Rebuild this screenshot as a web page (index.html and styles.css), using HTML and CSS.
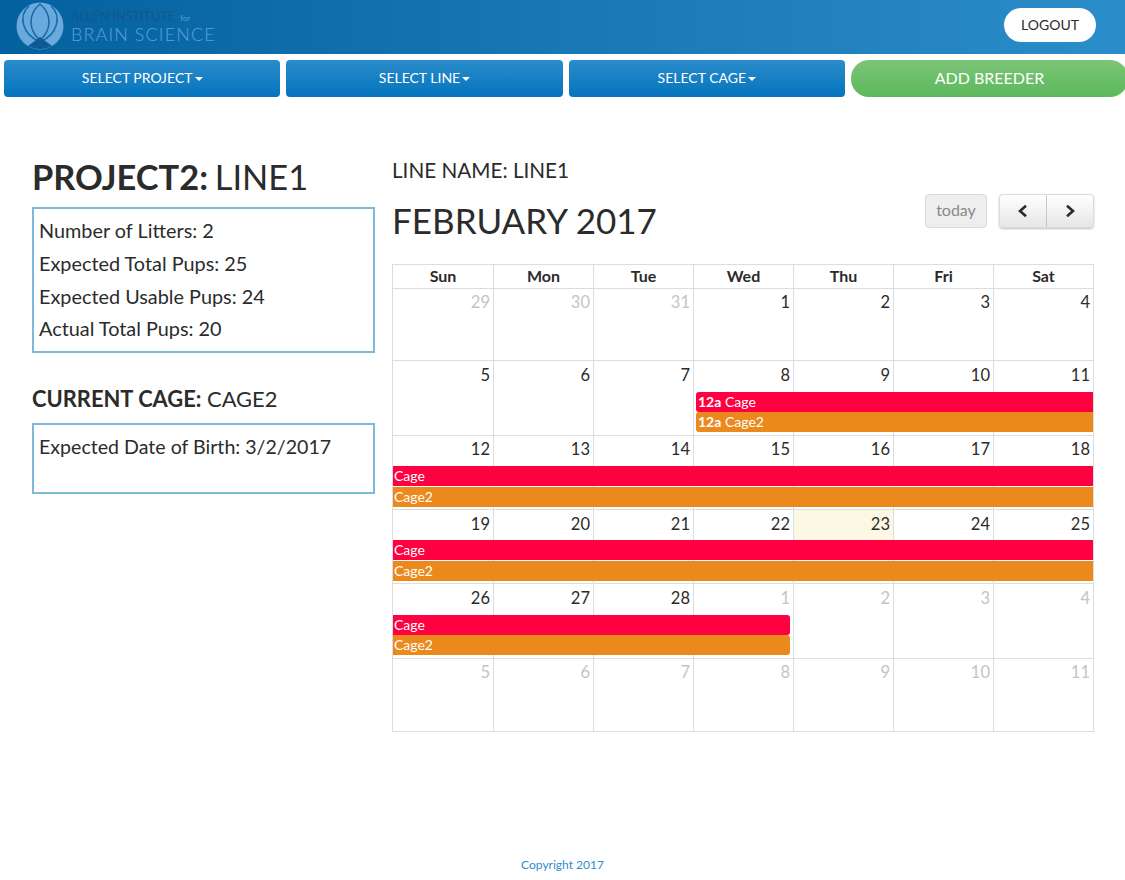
FILE: index.html
```html
<!DOCTYPE html>
<html>

<head>
    <title>Breeding Calendar</title>
    <link rel="stylesheet" href="styles.css">
</head>

<body>
    <header class="topbar">
        <div class="brand">
            <svg class="brand-logo" width="48" height="50" viewBox="0 0 48 50">
                <circle cx="24" cy="24" r="23.5" fill="#6aa9dc"/>
                <path d="M24 2C12 12 12 28 24 38C36 28 36 12 24 2Z" fill="none" stroke="#1a6ca8" stroke-width="1.6"/>
                <path d="M13 4C2 14 6 32 24 40C42 32 46 14 35 4" fill="none" stroke="#1a6ca8" stroke-width="1.6"/>
                <path d="M24 35L36 44C30 48 18 48 12 44Z" fill="#0f5a94"/>
            </svg>
            <div class="brand-text">
                <div class="brand-top">ALLEN INSTITUTE <small>for</small></div>
                <div class="brand-bottom">BRAIN SCIENCE</div>
            </div>
        </div>
        <button class="logout" type="button">LOGOUT</button>
    </header>

    <nav class="actions">
        <button class="select-btn" type="button">SELECT PROJECT<span class="caret"></span></button>
        <button class="select-btn" type="button">SELECT LINE<span class="caret"></span></button>
        <button class="select-btn" type="button">SELECT CAGE<span class="caret"></span></button>
        <button class="add-btn" type="button">ADD BREEDER</button>
    </nav>

    <main class="content">
        <section class="sidebar">
            <h1 class="project-title"><b>PROJECT2:</b> LINE1</h1>
            <div class="info-box stats">
                <p>Number of Litters: 2</p>
                <p>Expected Total Pups: 25</p>
                <p>Expected Usable Pups: 24</p>
                <p>Actual Total Pups: 20</p>
            </div>
            <h2 class="cage-title"><b>CURRENT CAGE:</b> CAGE2</h2>
            <div class="info-box birth">
                <p>Expected Date of Birth: 3/2/2017</p>
            </div>
        </section>

        <section class="calendar-wrap">
            <div class="line-name">LINE NAME: LINE1</div>
            <div class="cal-toolbar">
                <h2 class="month">FEBRUARY 2017</h2>
                <div class="cal-buttons">
                    <button class="today-btn" type="button">today</button>
                    <div class="nav-group">
                        <button type="button">
                            <svg width="14" height="14" viewBox="0 0 14 14"><path d="M10 1.7L4 7L10 12.3" fill="none" stroke="#2b2b2b" stroke-width="2.6"/></svg>
                        </button>
                        <button type="button">
                            <svg width="14" height="14" viewBox="0 0 14 14"><path d="M4 1.7L10 7L4 12.3" fill="none" stroke="#2b2b2b" stroke-width="2.6"/></svg>
                        </button>
                    </div>
                </div>
            </div>

            <div class="calendar">
                <div class="cal-head">
                    <div>Sun</div><div>Mon</div><div>Tue</div><div>Wed</div><div>Thu</div><div>Fri</div><div>Sat</div>
                </div>

                <div class="week h72 raised">
                    <div class="day other c1">29</div><div class="day other c2">30</div><div class="day other c3">31</div>
                    <div class="day c4">1</div><div class="day c5">2</div><div class="day c6">3</div><div class="day c7">4</div>
                </div>

                <div class="week h75">
                    <div class="day c1">5</div><div class="day c2">6</div><div class="day c3">7</div><div class="day c4">8</div>
                    <div class="day c5">9</div><div class="day c6">10</div><div class="day c7">11</div>
                    <div class="event red row2 from-wed start"><b>12a</b> Cage</div>
                    <div class="event orange row3 from-wed start"><b>12a</b> Cage2</div>
                </div>

                <div class="week h74 raised">
                    <div class="day c1">12</div><div class="day c2">13</div><div class="day c3">14</div><div class="day c4">15</div>
                    <div class="day c5">16</div><div class="day c6">17</div><div class="day c7">18</div>
                    <div class="event red row2 full">Cage</div>
                    <div class="event orange row3 full">Cage2</div>
                </div>

                <div class="week h74">
                    <div class="day c1">19</div><div class="day c2">20</div><div class="day c3">21</div><div class="day c4">22</div>
                    <div class="day today c5">23</div><div class="day c6">24</div><div class="day c7">25</div>
                    <div class="event red row2 full">Cage</div>
                    <div class="event orange row3 full">Cage2</div>
                </div>

                <div class="week h75">
                    <div class="day c1">26</div><div class="day c2">27</div><div class="day c3">28</div><div class="day other c4">1</div>
                    <div class="day other c5">2</div><div class="day other c6">3</div><div class="day other c7">4</div>
                    <div class="event red row2 to-wed end">Cage</div>
                    <div class="event orange row3 to-wed end">Cage2</div>
                </div>

                <div class="week h73 raised">
                    <div class="day other c1">5</div><div class="day other c2">6</div><div class="day other c3">7</div><div class="day other c4">8</div>
                    <div class="day other c5">9</div><div class="day other c6">10</div><div class="day other c7">11</div>
                </div>
            </div>
        </section>
    </main>

    <footer class="footer">Copyright 2017</footer>
</body>

</html>
```

FILE: styles.css
```css
* {
    box-sizing: border-box;
}

body {
    margin: 0;
    font-family: Lato, "Open Sans", sans-serif;
    color: #2b2b2b;
    background-color: #ffffff;
    overflow-x: hidden;
}

button {
    font-family: inherit;
    cursor: pointer;
}

/* top bar */
.topbar {
    display: flex;
    justify-content: space-between;
    align-items: center;
    height: 54px;
    padding: 0 29px 4px 16px;
    background: linear-gradient(to right, #04619f, #2c8dcb);
}

.brand {
    display: flex;
    align-items: flex-start;
    gap: 7px;
    height: 50px;
}

.brand-logo {
    display: block;
    margin-top: 2px;
}

.brand-text {
    padding-top: 10px;
}

.brand-top {
    font-size: 12.6px;
    line-height: 13px;
    color: #14578d;
}

.brand-top small {
    font-size: 8px;
    color: #5a9fd6;
    margin-left: 2px;
}

.brand-bottom {
    font-size: 18px;
    font-weight: 300;
    line-height: 18px;
    letter-spacing: 1.1px;
    color: #5aa3dc;
}

.logout {
    width: 92px;
    height: 34px;
    padding: 0 0 2px;
    border: none;
    border-radius: 17px;
    background-color: #ffffff;
    color: #2b2b2b;
    font-size: 14px;
}

/* action buttons */
.actions {
    display: flex;
    gap: 6px;
    padding: 6px 0 0 4px;
}

.select-btn {
    width: 276.33px;
    height: 37px;
    padding: 0 0 2px;
    border: none;
    border-radius: 4px;
    background: linear-gradient(to bottom, #2a8ccb, #0474bd);
    color: #ffffff;
    font-size: 14px;
}

.caret {
    display: inline-block;
    margin-left: 2px;
    vertical-align: middle;
    border-top: 4px solid #ffffff;
    border-left: 4px solid transparent;
    border-right: 4px solid transparent;
}

.add-btn {
    flex: 1;
    height: 37px;
    padding: 0 0 2px;
    margin-right: -3px;
    border: none;
    border-radius: 18px;
    background: linear-gradient(to bottom, #7cc576, #5cb85c);
    color: #ffffff;
    font-size: 16px;
}

/* main layout */
.content {
    display: flex;
    padding: 56px 31px 0 32px;
}

.sidebar {
    width: 343px;
    margin-right: 17px;
}

.project-title {
    margin: 3px 0 9px;
    font-size: 34.4px;
    line-height: 42px;
    font-weight: 400;
}

.project-title b {
    margin-right: -2px;
}

.info-box {
    border: 2px solid #7fb9d9;
    padding: 6px 5px;
}

.info-box p {
    margin: 0;
    font-size: 19.85px;
    line-height: 32.8px;
}

.stats {
    height: 146px;
    padding-top: 5px;
}

.birth {
    height: 71px;
}

.info-box.birth p {
    font-size: 19.6px;
}

.cage-title {
    margin: 32px 0 10px;
    font-size: 21.9px;
    line-height: 28px;
    font-weight: 400;
}

/* calendar */
.calendar-wrap {
    width: 702px;
}

.line-name {
    font-size: 20.7px;
    line-height: 28px;
    margin: 3px 0 10px;
}

.cal-toolbar {
    display: flex;
    justify-content: space-between;
    align-items: flex-start;
    height: 70px;
}

.month {
    margin: 3px 0 0;
    font-size: 35px;
    line-height: 46px;
    font-weight: 400;
}

.cal-buttons {
    display: flex;
    gap: 12px;
}

.today-btn {
    width: 62px;
    height: 34px;
    padding: 0 0 3px;
    border: 1px solid #d9d9d9;
    border-radius: 4px;
    background-color: #eeeeee;
    color: #8a8a8a;
    font-size: 16px;
}

.nav-group {
    display: flex;
    height: 34px;
    border-radius: 4px;
    box-shadow: 0 1px 2px rgba(0, 0, 0, 0.25);
}

.nav-group button {
    display: flex;
    align-items: center;
    justify-content: center;
    width: 47.5px;
    padding: 0;
    border: 1px solid #dcdcdc;
    background: linear-gradient(to bottom, #ffffff, #e6e6e6);
}

.nav-group button:first-child {
    border-radius: 4px 0 0 4px;
    border-right-color: #c8c8c8;
}

.nav-group button:last-child {
    border-radius: 0 4px 4px 0;
    border-left: none;
}

.calendar {
    border: 1px solid #dddddd;
    border-bottom: none;
}

.cal-head {
    display: grid;
    grid-template-columns: repeat(7, 1fr);
    height: 24px;
    border-bottom: 1px solid #dddddd;
    font-size: 16px;
    font-weight: 700;
    line-height: 22px;
    text-align: center;
}

.cal-head div {
    border-left: 1px solid #dddddd;
}

.cal-head div:first-child {
    border-left: none;
}

.week {
    display: grid;
    grid-template-columns: repeat(7, 1fr);
    grid-template-rows: 31px 20px 20px 1fr;
    border-bottom: 1px solid #dddddd;
}

.h72 { height: 72px; }
.h73 { height: 73px; }
.h75 { height: 75px; }

/* these rows leave a 1px gap between the two event bars */
.h74 {
    height: 74px;
    grid-template-rows: 30px 21px 20px 1fr;
}

.h74 .row2 {
    height: 20px;
}

.day {
    grid-row: 1 / -1;
    padding: 4px 3px 0 0;
    border-left: 1px solid #dddddd;
    font-size: 16.5px;
    line-height: 20px;
    text-align: right;
}

.raised .day {
    padding-top: 3px;
}

.day.c1 {
    border-left: none;
}

.c1 { grid-column: 1; }
.c2 { grid-column: 2; }
.c3 { grid-column: 3; }
.c4 { grid-column: 4; }
.c5 { grid-column: 5; }
.c6 { grid-column: 6; }
.c7 { grid-column: 7; }

.other {
    color: #c4c4c4;
}

.today {
    background: linear-gradient(to bottom, #fcf8e3 30px, #ffffff 30px);
}

.event {
    padding-left: 1px;
    color: #ffffff;
    font-size: 14px;
    line-height: 20px;
    white-space: nowrap;
    overflow: hidden;
}

.event b {
    font-weight: 700;
}

.red {
    background-color: #ff0040;
}

.orange {
    background-color: #ec891d;
}

.row2 { grid-row: 2; }
.row3 { grid-row: 3; }

.full { grid-column: 1 / -1; }
.from-wed { grid-column: 4 / -1; margin-left: 3px; padding-left: 2px; }
.to-wed { grid-column: 1 / 5; margin-right: 3px; }

.start {
    border-radius: 3px 0 0 3px;
}

.end {
    border-radius: 0 3px 3px 0;
}

.footer {
    margin-top: 125px;
    text-align: center;
    font-size: 12px;
    line-height: 16px;
    color: #2c8dcb;
}
```
